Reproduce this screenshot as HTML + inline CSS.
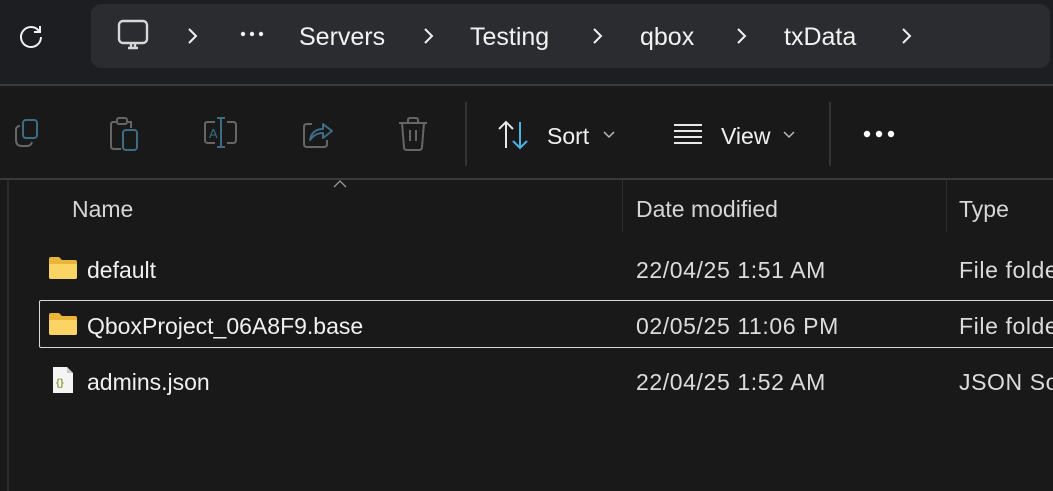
<!DOCTYPE html>
<html><head><style>
*{margin:0;padding:0;box-sizing:border-box}
html,body{width:1053px;height:491px;overflow:hidden}
body{background:#191919;font-family:"Liberation Sans",sans-serif;color:#fff;position:relative}
#w{position:absolute;left:0;top:0;width:1053px;height:491px;overflow:hidden}
.top{position:absolute;left:0;top:0;width:1053px;height:84px;background:#1d1e22}
.crumb{position:absolute;left:91px;top:4px;width:959px;height:64px;background:#2b2c30;border-radius:10px}
.t{position:absolute;white-space:nowrap}
.bc{font-size:25px;top:23px;color:#f2f2f2}
.hl{position:absolute;left:0;width:1053px;height:2px;background:#3a3a3a}
.tb{position:absolute;left:0;top:86px;width:1053px;height:92px;background:#191919}
.vl{position:absolute;width:2px;background:#333}
.col{font-size:23px;color:#d6d6d6;top:196px}
.row{font-size:23px;color:#f0f0f0}
.d{color:#dcdcdc;letter-spacing:0.6px}
.clip{position:absolute;left:959px;width:94px;overflow:hidden;white-space:nowrap;font-size:23px;color:#dcdcdc;letter-spacing:0.6px}
</style></head><body><div id="w">
<div class="top">
<svg class="t" style="left:17px;top:23px" width="28" height="28" viewBox="0 0 28 28"><path d="M22 8 A10 10 0 1 0 24 14" fill="none" stroke="#f0f0f0" stroke-width="2"/><path d="M23 3 V9 H17" fill="none" stroke="#f0f0f0" stroke-width="2"/></svg>
<div class="crumb"></div>
<svg class="t" style="left:117px;top:19px" width="32" height="32" viewBox="0 0 32 32"><rect x="2" y="2" width="28" height="22" rx="4" fill="none" stroke="#d8d8d8" stroke-width="2.4"/><path d="M11 29 H21 M14 24 V29 M18 24 V29" stroke="#d8d8d8" stroke-width="2.4"/></svg>
<svg class="t" style="left:187px;top:27px" width="12" height="18"><path d="M2 2 L9 9 L2 16" fill="none" stroke="#f0f0f0" stroke-width="2"/></svg>
<svg class="t" style="left:240px;top:31px" width="24" height="6"><circle cx="3" cy="3" r="2.2" fill="#f0f0f0"/><circle cx="12" cy="3" r="2.2" fill="#f0f0f0"/><circle cx="21" cy="3" r="2.2" fill="#f0f0f0"/></svg>
<div class="t bc" style="left:299px">Servers</div>
<svg class="t" style="left:423px;top:27px" width="12" height="18"><path d="M2 2 L9 9 L2 16" fill="none" stroke="#f0f0f0" stroke-width="2"/></svg>
<div class="t bc" style="left:470px">Testing</div>
<svg class="t" style="left:592px;top:27px" width="12" height="18"><path d="M2 2 L9 9 L2 16" fill="none" stroke="#f0f0f0" stroke-width="2"/></svg>
<div class="t bc" style="left:640px">qbox</div>
<svg class="t" style="left:736px;top:27px" width="12" height="18"><path d="M2 2 L9 9 L2 16" fill="none" stroke="#f0f0f0" stroke-width="2"/></svg>
<div class="t bc" style="left:784px">txData</div>
<svg class="t" style="left:901px;top:27px" width="12" height="18"><path d="M2 2 L9 9 L2 16" fill="none" stroke="#f0f0f0" stroke-width="2"/></svg>
</div>
<div class="hl" style="top:84px"></div>
<div class="tb">
<svg class="t" style="left:14px;top:32px" width="32" height="32" viewBox="0 0 32 32"><rect x="9" y="2" width="14" height="18" rx="3" fill="none" stroke="#3d6d85" stroke-width="2"/><path d="M6 8 Q2 8 2 12 V22 Q2 28 8 28 H13 Q17 28 18 24" fill="none" stroke="#666" stroke-width="2"/></svg>
<svg class="t" style="left:110px;top:30px" width="32" height="36" viewBox="0 0 32 36"><path d="M6 6 H3 Q1 6 1 9 V30 Q1 33 4 33 H11" fill="none" stroke="#666" stroke-width="2"/><path d="M18 6 H21 V12" fill="none" stroke="#666" stroke-width="2"/><rect x="7" y="2" width="10" height="6" rx="2" fill="none" stroke="#666" stroke-width="2"/><rect x="13" y="14" width="14" height="20" rx="3" fill="none" stroke="#3d6d85" stroke-width="2"/></svg>
<svg class="t" style="left:203px;top:31px" width="36" height="32" viewBox="0 0 36 32"><path d="M12 5 H4 Q2 5 2 8 V23 Q2 26 5 26 H12 M24 5 H30 Q33 5 33 8 V23 Q33 26 30 26 H24" fill="none" stroke="#666" stroke-width="2"/><path d="M18 1 V30 M14 1 H22 M14 30 H22" stroke="#3d6d85" stroke-width="2"/><text x="6" y="21" font-size="13" fill="#3d6d85" font-family="Liberation Sans">A</text></svg>
<svg class="t" style="left:302px;top:32px" width="32" height="32" viewBox="0 0 32 32"><path d="M10 6 H5 Q2 6 2 9 V26 Q2 29 5 29 H22 Q25 29 25 26 V22" fill="none" stroke="#666" stroke-width="2"/><path d="M8 22 Q10 11 21 11 V6 L30 13 L21 20 V15 Q13 15 8 22Z" fill="none" stroke="#3d6d85" stroke-width="2" stroke-linejoin="round"/></svg>
<svg class="t" style="left:397px;top:31px" width="32" height="34" viewBox="0 0 32 34"><path d="M2 6 H30 M11 6 V3 Q11 1 13 1 H19 Q21 1 21 3 V6 M5 6 L7 30 Q7 33 10 33 H22 Q25 33 25 30 L27 6 M13 13 V24 M19 13 V24" fill="none" stroke="#666" stroke-width="2"/></svg>
<div class="vl" style="left:465px;top:16px;height:64px"></div>
<svg class="t" style="left:497px;top:33px" width="36" height="32" viewBox="0 0 36 32"><path d="M9 29 V3 M2 10 L9 3 L16 10" fill="none" stroke="#e8e8e8" stroke-width="2"/><path d="M23 3 V29 M16 22 L23 29 L30 22" fill="none" stroke="#4cb1e3" stroke-width="2"/></svg>
<div class="t row" style="left:547px;top:37px;font-size:23px">Sort</div>
<svg class="t" style="left:603px;top:45px" width="12" height="8"><path d="M1 1 L6 6 L11 1" fill="none" stroke="#bbb" stroke-width="1.5"/></svg>
<svg class="t" style="left:673px;top:37px" width="30" height="22"><path d="M1 2H29M1 8H29M1 14H29M1 20H29" stroke="#e8e8e8" stroke-width="2"/></svg>
<div class="t row" style="left:721px;top:37px;font-size:23px">View</div>
<svg class="t" style="left:783px;top:45px" width="12" height="8"><path d="M1 1 L6 6 L11 1" fill="none" stroke="#bbb" stroke-width="1.5"/></svg>
<div class="vl" style="left:829px;top:16px;height:64px"></div>
<svg class="t" style="left:862px;top:43px" width="36" height="10"><circle cx="5" cy="5" r="3.2" fill="#fff"/><circle cx="17" cy="5" r="3.2" fill="#fff"/><circle cx="29" cy="5" r="3.2" fill="#fff"/></svg>
</div>
<div class="hl" style="top:178px"></div>
<div class="vl" style="left:7px;top:180px;height:311px;background:#2a2a2a"></div>
<svg class="t" style="left:333px;top:180px" width="14" height="8"><path d="M1 7 L7 1 L13 7" fill="none" stroke="#999" stroke-width="1.3"/></svg>
<div class="t col" style="left:72px">Name</div>
<div class="vl" style="left:622px;top:180px;height:52px;background:#2f2f2f;width:1px"></div>
<div class="t col" style="left:636px">Date modified</div>
<div class="vl" style="left:946px;top:180px;height:52px;background:#2f2f2f;width:1px"></div>
<div class="t col" style="left:959px">Type</div>

<svg class="t" style="left:48px;top:256px" width="30" height="24"><path d="M1 3 Q1 1 3 1 H11 L14 4 H27 Q29 4 29 6 V21 Q29 23 27 23 H3 Q1 23 1 21Z" fill="#e8b53a"/><path d="M1 8 H29 V21 Q29 23 27 23 H3 Q1 23 1 21Z" fill="#fcd466"/></svg>
<div class="t row" style="left:87px;top:257px">default</div>
<div class="t row d" style="left:636px;top:257px">22/04/25 1:51 AM</div>
<div class="clip" style="top:257px">File folder</div>

<div style="position:absolute;left:39px;top:300px;width:1014px;height:48px;border:1px solid #d8d8d8;border-right:none;border-radius:2px 0 0 2px"></div>
<svg class="t" style="left:48px;top:312px" width="30" height="24"><path d="M1 3 Q1 1 3 1 H11 L14 4 H27 Q29 4 29 6 V21 Q29 23 27 23 H3 Q1 23 1 21Z" fill="#e8b53a"/><path d="M1 8 H29 V21 Q29 23 27 23 H3 Q1 23 1 21Z" fill="#fcd466"/></svg>
<div class="t row" style="left:87px;top:313px">QboxProject_06A8F9.base</div>
<div class="t row d" style="left:636px;top:313px">02/05/25 11:06 PM</div>
<div class="clip" style="top:313px">File folder</div>

<svg class="t" style="left:52px;top:366px" width="22" height="28"><path d="M1 1 H15 L21 7 V27 H1Z" fill="#f4f4f4"/><path d="M15 1 V7 H21" fill="#ccc"/><text x="4" y="20" font-size="10" fill="#8aa33a" font-family="Liberation Sans" font-weight="bold">{}</text></svg>
<div class="t row" style="left:87px;top:369px">admins.json</div>
<div class="t row d" style="left:636px;top:369px">22/04/25 1:52 AM</div>
<div class="clip" style="top:369px">JSON Source</div>
</div></body></html>
